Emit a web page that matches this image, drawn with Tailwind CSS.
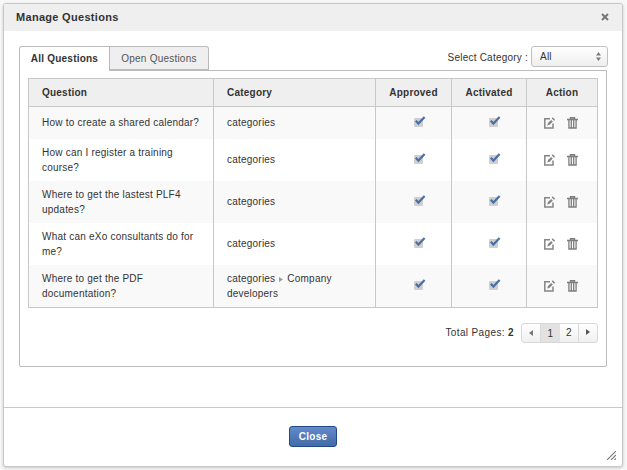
<!DOCTYPE html>
<html lang="en">
<head>
<meta charset="utf-8">
<title>Manage Questions</title>
<script src="https://cdn.jsdelivr.net/npm/@tailwindcss/browser@4"></script>
</head>
<body class="w-[627px] h-[470px] overflow-hidden bg-[#f7f7f7] pl-[3px] pt-[3px] font-['Liberation_Sans',Arial,sans-serif] text-[10px] leading-[15px] tracking-[0.22px] text-[#333]">
<svg class="hidden">
  <symbol id="check" viewBox="0 0 12 12"><rect x="0" y="2" width="9" height="9" rx="1" fill="#cfcfcf"/><path d="M1.8 4.8 4.4 7.6 10.6 1" fill="none" stroke="#4b70a8" stroke-width="2.2"/></symbol>
  <symbol id="edit" viewBox="0 0 12 12"><path d="M6 1.7H.8V11H9V6.5" fill="none" stroke="#858585" stroke-width="1.5"/><path d="M3.2 8.6 4 6 7.1 2.9 8.8 4.6 5.7 7.7Z" fill="#858585"/><path d="M8.2 .9 10.6 3.3" stroke="#858585" stroke-width="1.5"/></symbol>
  <symbol id="trash" viewBox="0 0 12 12"><path d="M3.5 2V.7H7.5V2M0 2.5H11" fill="none" stroke="#7d7d7d" stroke-width="1.4"/><path d="M1.9 3V11H9.1V3M4.3 3V11M6.7 3V11" fill="none" stroke="#7d7d7d" stroke-width="1.3"/></symbol>
</svg>
<main class="flex flex-col w-[620px] h-[464px] bg-white border border-[#c8c8c8] rounded-[3px] shadow-[0_1px_3px_rgba(0,0,0,0.2)]">
  <header class="flex items-center justify-between h-[27px] shrink-0 bg-[#efefef] pl-[12px] pr-[13px] rounded-t-[2px]">
    <h1 class="text-[11px] font-bold tracking-[0.3px]">Manage Questions</h1>
    <svg class="size-[8px] relative -top-px" viewBox="0 0 8 8"><path d="M1 1 7 7M7 1 1 7" stroke="#777" stroke-width="2"/></svg>
  </header>
  <section class="h-[377px] shrink-0 border-b border-[#c8c8c8] px-[15px] pt-[15px]">
    <div class="flex justify-between h-[24px] w-[589px]">
      <nav class="flex h-[24px]">
        <div class="w-[91px] h-[25px] relative z-10 border border-b-0 border-[#bbb] rounded-tl-[3px] bg-white font-bold text-center leading-[24px]">All Questions</div>
        <div class="w-[99px] h-[24px] border border-l-0 border-[#bbb] rounded-tr-[3px] bg-[#efefef] text-[#555] text-center leading-[24px]">Open Questions</div>
      </nav>
      <div class="flex">
        <span class="leading-[23px] mr-[3px]">Select Category :</span>
        <div class="flex items-center justify-between w-[77px] h-[21px] border border-[#c0c0c0] rounded-[3px] bg-linear-to-b from-white to-[#eee] pl-[8px] pr-[6px] leading-[19px]"><span>All</span>
          <svg class="w-[5px] h-[9px]" viewBox="0 0 5 9"><path d="M0 3.5 2.5 0 5 3.5ZM0 5.5 2.5 9 5 5.5Z" fill="#7d7d7d"/></svg></div>
      </div>
    </div>
    <div class="w-[588px] h-[297px] border border-[#bbb] rounded-b-[2px] px-[8px] pt-[7px]">
      <div id="table" class="w-[570px] border border-[#c8c8c8]">
        <div class="grid grid-cols-[185px_162px_76px_75px_70px] h-[28px] border-b border-[#c8c8c8] bg-[#efefef] font-bold leading-[27px]">
          <div class="border-r border-[#c8c8c8] pl-[13px]">Question</div>
          <div class="border-r border-[#c8c8c8] pl-[13px]">Category</div>
          <div class="border-r border-[#c8c8c8] text-center">Approved</div>
          <div class="border-r border-[#c8c8c8] text-center">Activated</div>
          <div class="text-center">Action</div>
        </div>
      </div>
      <div class="flex justify-end mt-[15px]">
        <span class="leading-[20px] mr-[7px] tracking-[0.37px]">Total Pages: <span class="font-bold">2</span></span>
        <div class="flex w-[77px] h-[20px] border border-[#d8d8d8] rounded-[3px] bg-linear-to-b from-white to-[#f0f0f0] overflow-hidden text-center leading-[19px]">
          <div class="w-[19px] border-r border-[#d8d8d8] flex justify-center pt-[6px]"><svg class="w-[4px] h-[6px]" viewBox="0 0 4 6"><path d="M4 0V6L0 3Z" fill="#777"/></svg></div>
          <div class="w-[19px] bg-[#e2e2e2] pt-px leading-[18px]">1</div>
          <div class="w-[19px] border-r border-[#d8d8d8] leading-[18px]">2</div>
          <div class="w-[18px] flex justify-center pt-[5px]"><svg class="w-[4px] h-[6px]" viewBox="0 0 4 6"><path d="M0 0V6L4 3Z" fill="#555"/></svg></div>
        </div>
      </div>
    </div>
  </section>
  <footer class="grow relative flex justify-center items-start pt-[18px]">
    <button class="w-[48px] h-[21px] border border-[#224886] rounded-[3px] bg-linear-to-b from-[#638acb] to-[#426ba8] text-white font-bold leading-[19px] tracking-[0.3px]">Close</button>
    <svg class="absolute right-[6px] bottom-[6px] size-[9px]" viewBox="0 0 9 9"><path d="M0 9 9 0M4 9 9 4M7.5 9 9 7.5" stroke="#777" stroke-width="1.1"/></svg>
  </footer>
</main>
<script>
const arrow = '<svg class="inline-block w-[4px] h-[5px] mx-[4px] align-baseline" viewBox="0 0 4 5"><path d="M0 0V5L4 2.5Z" fill="#999"/></svg>';
const rows = [
  ['How to create a shared calendar?', 'categories'],
  ['How can I register a training<br>course?', 'categories'],
  ['Where to get the lastest PLF4<br>updates?', 'categories'],
  ['What can eXo consultants do for<br>me?', 'categories'],
  ['Where to get the PDF<br>documentation?', 'categories' + arrow + 'Company<br>developers']
];
const approved = '<div class="border-r border-[#c8c8c8] flex items-center pl-[38px] pb-[2px]"><svg class="size-[12px] shrink-0"><use href="#check"/></svg></div>';
const activated = '<div class="border-r border-[#c8c8c8] flex items-center pl-[37px] pb-[2px]"><svg class="size-[12px] shrink-0"><use href="#check"/></svg></div>';
document.getElementById('table').insertAdjacentHTML('beforeend', rows.map((r, i) =>
  `<div class="grid grid-cols-[185px_162px_76px_75px_70px] ${i ? 'h-[42px]' : 'h-[32px]'} ${i % 2 ? 'bg-white' : 'bg-[#f9f9f9]'}">
    <div class="border-r border-[#c8c8c8] pl-[13px] flex items-center ${i ? '' : 'pb-[2px]'}"><p>${r[0]}</p></div>
    <div class="border-r border-[#c8c8c8] pl-[13px] flex items-center ${i < 4 ? 'pb-[2px]' : ''}"><p>${r[1]}</p></div>
    ${approved}${activated}
    <div class="flex items-center gap-[11px] pl-[17px]"><svg class="size-[12px]"><use href="#edit"/></svg><svg class="size-[12px]"><use href="#trash"/></svg></div>
  </div>`).join(''));
</script>
</body>
</html>
